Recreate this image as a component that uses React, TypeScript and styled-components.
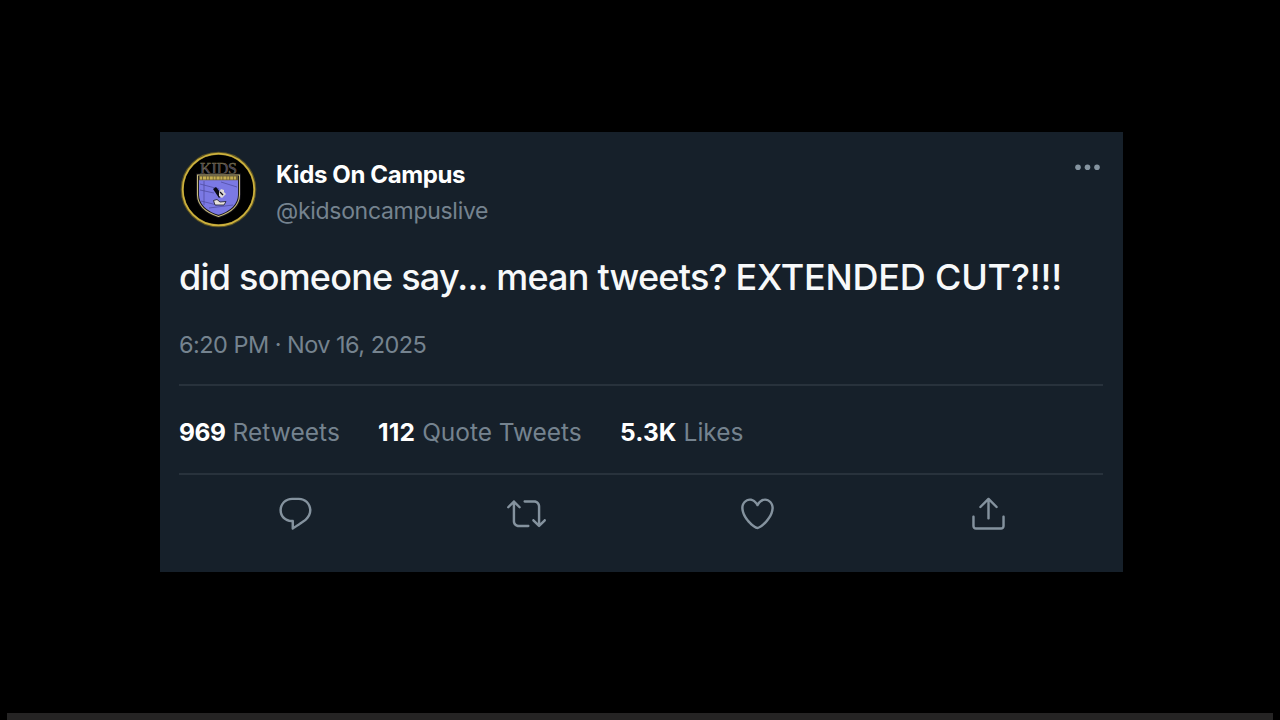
import React from "react";
import styled, { createGlobalStyle } from "styled-components";

const GlobalStyle = createGlobalStyle`
  * { box-sizing: border-box; }
  body { margin: 0; background: #000; font-family: Inter, "Liberation Sans", sans-serif; }
`;

const Page = styled.main`
  display: flex;
  flex-direction: column;
  width: 1280px;
  height: 720px;
  overflow: hidden;
  background: #000;
`;

const Card = styled.article`
  width: 963px;
  height: 440px;
  margin: 132px 0 0 160px;
  padding: 19px 19px 0;
  background: #16202a;
`;

const Header = styled.header`
  display: flex;
  height: 77px;
`;

const Avatar = styled.svg`
  width: 78px;
  height: 78px;
  margin-right: 19px;
  flex: none;
`;

const Author = styled.div`
  display: flex;
  flex-direction: column;
  flex: 1;
  padding-top: 6px;
`;

const Line = styled.span<{ $size: number; $track?: number; $bold?: boolean; $muted?: boolean }>`
  font-size: ${(p) => p.$size}px;
  line-height: 36px;
  letter-spacing: ${(p) => p.$track ?? 0}px;
  font-weight: ${(p) => (p.$bold ? 700 : 400)};
  color: ${(p) => (p.$muted ? "#75838f" : "#fff")};
  white-space: nowrap;
`;

const MoreIcon = styled.svg`
  width: 28px;
  height: 8px;
  margin: 12px 3px 0 0;
  fill: #8594a0;
`;

const Message = styled.p`
  margin: 24px 0 0;
  font-size: 36px;
  font-weight: 450;
  line-height: 50px;
  letter-spacing: -0.78px;
  color: #f7f9fa;
  white-space: nowrap;
`;

const Shout = styled.span`
  letter-spacing: -0.2px;
`;

const Timestamp = styled.div`
  display: flex;
  height: 82px;
  padding-top: 25px;
`;

const Stats = styled.div`
  display: flex;
  align-items: center;
  height: 91px;
  margin-right: 1px;
  border-top: 2px solid #28323c;
  border-bottom: 2px solid #28323c;
`;

const Stat = styled.div<{ $width: number }>`
  display: flex;
  gap: 7px;
  width: ${(p) => p.$width}px;
  padding-top: 5px;
`;

const Actions = styled.div`
  display: grid;
  grid-template-columns: repeat(4, 231px);
  justify-items: center;
  padding-top: 18.6px;
  margin-left: 0.5px;
`;

const ActionIcon = styled.svg`
  width: 39px;
  height: 39px;
  fill: #84929e;
`;

const Footer = styled.footer`
  height: 7px;
  margin: auto 7px 0;
  background: #252424;
`;

const stats = [
  { value: "969", label: "Retweets", width: 199, track: -0.4, labelTrack: 0.05 },
  { value: "112", label: "Quote Tweets", width: 242, track: 0.2, labelTrack: -0.05 },
  { value: "5.3K", label: "Likes", width: 200, track: 0.1, labelTrack: 0 },
];

const actions = [
  {
    name: "Reply",
    d: "M14.046 2.242l-4.148-.01h-.002c-4.374 0-7.8 3.427-7.8 7.802 0 4.098 3.186 7.206 7.465 7.37v3.828c0 .108.044.286.12.403.142.225.384.347.632.347.138 0 .277-.038.402-.118.264-.168 6.473-4.14 8.088-5.506 1.902-1.61 3.04-3.97 3.043-6.312v-.017c-.006-4.367-3.43-7.787-7.8-7.788zm3.787 12.972c-1.134.96-4.862 3.405-6.772 4.643V16.67c0-.414-.335-.75-.75-.75h-.396c-3.66 0-6.318-2.476-6.318-5.886 0-3.534 2.768-6.302 6.3-6.302l4.147.01h.002c3.532 0 6.3 2.766 6.302 6.296-.003 1.91-.942 3.844-2.514 5.176z",
  },
  {
    name: "Retweet",
    d: "M23.77 15.67c-.292-.293-.767-.293-1.06 0l-2.22 2.22V7.65c0-2.068-1.683-3.75-3.75-3.75h-5.85c-.414 0-.75.336-.75.75s.336.75.75.75h5.85c1.24 0 2.25 1.01 2.25 2.25v10.24l-2.22-2.22c-.293-.293-.768-.293-1.06 0s-.294.768 0 1.06l3.5 3.5c.145.147.337.22.53.22s.383-.072.53-.22l3.5-3.5c.294-.292.294-.767 0-1.06zm-10.66 3.28H7.26c-1.24 0-2.25-1.01-2.25-2.25V6.46l2.22 2.22c.148.147.34.22.532.22s.384-.073.53-.22c.293-.293.293-.768 0-1.06l-3.5-3.5c-.293-.294-.768-.294-1.06 0l-3.5 3.5c-.294.292-.294.767 0 1.06s.767.293 1.06 0l2.22-2.22V16.7c0 2.068 1.683 3.75 3.75 3.75h5.85c.414 0 .75-.336.75-.75s-.337-.75-.75-.75z",
  },
  {
    name: "Like",
    d: "M12 21.638h-.014C9.403 21.59 1.95 14.856 1.95 8.478c0-3.064 2.525-5.754 5.403-5.754 2.29 0 3.83 1.58 4.646 2.73.814-1.148 2.354-2.73 4.645-2.73 2.88 0 5.404 2.69 5.404 5.755 0 6.376-7.454 13.11-10.037 13.157H12zM7.354 4.225c-2.08 0-3.903 1.988-3.903 4.255 0 5.74 7.034 11.596 8.55 11.658 1.518-.062 8.55-5.917 8.55-11.658 0-2.267-1.823-4.255-3.903-4.255-2.528 0-3.94 2.936-3.952 2.965-.23.562-1.156.562-1.387 0-.014-.03-1.425-2.965-3.954-2.965z",
  },
  {
    name: "Share",
    d: "M17.53 7.47l-5-5c-.293-.293-.768-.293-1.06 0l-5 5c-.294.293-.294.768 0 1.06s.767.294 1.06 0l3.72-3.72V15c0 .414.336.75.75.75s.75-.336.75-.75V4.81l3.72 3.72c.146.147.338.22.53.22s.384-.072.53-.22c.293-.293.293-.767 0-1.06zM19.708 21.944H4.292C3.028 21.944 2 20.916 2 19.652V14c0-.414.336-.75.75-.75s.75.336.75.75v5.652c0 .437.355.792.792.792h15.416c.437 0 .792-.355.792-.792V14c0-.414.336-.75.75-.75s.75.336.75.75v5.652c0 1.264-1.028 2.292-2.292 2.292z",
  },
];

function CrestAvatar() {
  return (
    <Avatar viewBox="0 0 78 78">
      <circle cx="39.5" cy="38.5" r="36.3" fill="#000" stroke="#5b5325" strokeWidth="3" />
      <circle cx="39.5" cy="38.5" r="35.8" fill="none" stroke="#cdb13c" strokeWidth="1.7" />
      <text x="39.5" y="23" textAnchor="middle" textLength="37" fontFamily="Liberation Serif, serif" fontSize="16" fill="#3b3866" stroke="#7d7242" strokeWidth="0.5">KIDS</text>
      <path d="M18.5 24H60.5V44Q60 59 39.5 65.5Q19 59 18.5 44Z" fill="#7b79e4" stroke="#17151c" strokeWidth="3" />
      <path d="M18.5 24H60.5V44Q60 59 39.5 65.5Q19 59 18.5 44Z" fill="none" stroke="#c9bd7c" strokeWidth="1.1" />
      <path d="M20 27H59" stroke="#6f6238" strokeWidth="4.5" />
      <path d="M21 27H58" stroke="#c4ad50" strokeWidth="2.8" strokeDasharray="2 1 3 .8" />
      <path d="M21 33L40 38M21 39L35 42M22 50L38 54M30 57L54 54M42 31L58 36M25 30V54" fill="none" stroke="#4b479a" strokeWidth="0.7" />
      <path d="M34 38L37 36L43.5 44L40 47Z" fill="#0b0b15" />
      <path d="M40 41L42 38L45 39L45 41L47 43L43 47L40 45Z" fill="#ddd9d6" />
      <path d="M41 41L44 44" stroke="#0b0b15" strokeWidth="1.3" />
      <path d="M34.5 49.5L38 48.5L41 51L47 50.5L45 54H36Z" fill="#e8e3dc" stroke="#18172b" strokeWidth="0.8" />
    </Avatar>
  );
}

export default function App() {
  return (
    <>
      <GlobalStyle />
      <Page>
        <Card>
          <Header>
            <CrestAvatar />
            <Author>
              <Line $size={24} $track={-0.38} $bold>Kids On Campus</Line>
              <Line $size={23} $track={-0.3} $muted>@kidsoncampuslive</Line>
            </Author>
            <MoreIcon viewBox="0 0 28 8">
              <circle cx="5" cy="4.3" r="2.8" />
              <circle cx="14.5" cy="4.3" r="2.8" />
              <circle cx="24" cy="4.3" r="2.8" />
            </MoreIcon>
          </Header>
          <Message>did someone say... mean tweets? <Shout>EXTENDED CUT?!!!</Shout></Message>
          <Timestamp>
            <Line $size={23.5} $track={-0.53} $muted>6:20 PM · Nov 16, 2025</Line>
          </Timestamp>
          <Stats>
            {stats.map((s) => (
              <Stat key={s.label} $width={s.width}>
                <Line $size={24.5} $bold $track={s.track}>{s.value}</Line>
                <Line $size={24.5} $muted $track={s.labelTrack}>{s.label}</Line>
              </Stat>
            ))}
          </Stats>
          <Actions>
            {actions.map((a) => (
              <ActionIcon key={a.name} viewBox="0 0 24 24" aria-label={a.name}>
                <path d={a.d} />
              </ActionIcon>
            ))}
          </Actions>
        </Card>
        <Footer />
      </Page>
    </>
  );
}
